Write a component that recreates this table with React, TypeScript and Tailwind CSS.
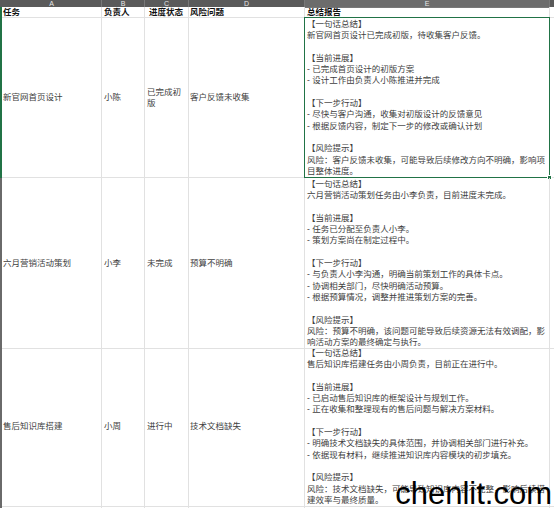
const cjk = "font-['Liberation_Sans','Noto_Sans_CJK_SC',sans-serif]";

type Row = {
  task: string;
  owner: string;
  status: string;
  risk: string;
  height: string;
  lines: string[];
};

const rows: Row[] = [
  {
    task: "新官网首页设计",
    owner: "小陈",
    status: "已完成初版",
    risk: "客户反馈未收集",
    height: "h-[160px]",
    lines: [
      "【一句话总结】",
      "新官网首页设计已完成初版，待收集客户反馈。",
      "",
      "【当前进展】",
      "- 已完成首页设计的初版方案",
      "- 设计工作由负责人小陈推进并完成",
      "",
      "【下一步行动】",
      "- 尽快与客户沟通，收集对初版设计的反馈意见",
      "- 根据反馈内容，制定下一步的修改或确认计划",
      "",
      "【风险提示】",
      "风险：客户反馈未收集，可能导致后续修改方向不明确，影响项",
      "目整体进度。",
    ],
  },
  {
    task: "六月营销活动策划",
    owner: "小李",
    status: "未完成",
    risk: "预算不明确",
    height: "h-[169px]",
    lines: [
      "【一句话总结】",
      "六月营销活动策划任务由小李负责，目前进度未完成。",
      "",
      "【当前进展】",
      "- 任务已分配至负责人小李。",
      "- 策划方案尚在制定过程中。",
      "",
      "【下一步行动】",
      "- 与负责人小李沟通，明确当前策划工作的具体卡点。",
      "- 协调相关部门，尽快明确活动预算。",
      "- 根据预算情况，调整并推进策划方案的完善。",
      "",
      "【风险提示】",
      "风险：预算不明确，该问题可能导致后续资源无法有效调配，影",
      "响活动方案的最终确定与执行。",
    ],
  },
  {
    task: "售后知识库搭建",
    owner: "小周",
    status: "进行中",
    risk: "技术文档缺失",
    height: "h-[159px]",
    lines: [
      "【一句话总结】",
      "售后知识库搭建任务由小周负责，目前正在进行中。",
      "",
      "【当前进展】",
      "- 已启动售后知识库的框架设计与规划工作。",
      "- 正在收集和整理现有的售后问题与解决方案材料。",
      "",
      "【下一步行动】",
      "- 明确技术文档缺失的具体范围，并协调相关部门进行补充。",
      "- 依据现有材料，继续推进知识库内容模块的初步填充。",
      "",
      "【风险提示】",
      "风险：技术文档缺失，可能导致知识库内容不完整，影响后续搭",
      "建效率与最终质量。",
    ],
  },
];

const grid = "grid grid-cols-[2px_100px_43px_44px_116px_245px_1fr]";
const cell = "border-r border-b border-[#e1e1e1]";

export default function App() {
  return (
    <div className={`relative w-[554px] h-[508px] overflow-hidden bg-white ${cjk}`}>
      {/* column letters */}
      <div className={`${grid} h-[7px] bg-[#5a5a5a] text-[7px] leading-[7px] text-[#e6e6e6]`}>
        <div />
        {["A", "B", "C", "D"].map((l) => (
          <div key={l} className="text-center border-r border-[#787878]">
            {l}
          </div>
        ))}
        <div className="text-center bg-[#6c6c6c] border-b border-[#217346] border-r border-[#787878]">E</div>
        <div />
      </div>

      {/* header row */}
      <div className={`${grid} h-[11px] text-[8.5px] leading-[10px] font-bold text-[#111]`}>
        <div className="bg-[#217346]" />
        <div className={`${cell} px-[1px] flex items-end`}>任务</div>
        <div className={`${cell} px-[2px] flex items-end`}>负责人</div>
        <div className={`${cell} px-[4px] flex items-end`}>进度状态</div>
        <div className={`${cell} px-[1px] flex items-end`}>风险问题</div>
        <div className={`${cell} px-[2px] flex items-end`}>总结报告</div>
        <div className="border-b border-[#e1e1e1]" />
      </div>

      {rows.map((r, i) => (
        <div key={r.task} className={`${grid} ${r.height} text-[8.5px] text-[#404040]`}>
          <div className={i === 0 ? "bg-[#217346]" : "bg-[#6a6a6a]"} />
          <div className={`${cell} px-[1px] flex items-center`}>{r.task}</div>
          <div className={`${cell} px-[2px] flex items-center`}>{r.owner}</div>
          <div className={`${cell} px-[2px] flex items-center leading-[11px]`}>{r.status}</div>
          <div className={`${cell} px-[1px] flex items-center`}>{r.risk}</div>
          <div className={`${cell} relative pl-[2px] pt-[1px] leading-[11.3px] whitespace-nowrap`}>
            {r.lines.map((line, j) => (
              <div key={j} className="h-[11.3px]">
                {line}
              </div>
            ))}
            {i === 0 && (
              <>
                <div className="absolute -left-px -top-px -right-px -bottom-px border-[1.5px] border-[#217346]" />
                <div className="absolute -right-[3px] -bottom-[3px] w-[5px] h-[5px] bg-[#217346] border border-white" />
              </>
            )}
          </div>
          <div className="border-b border-[#e1e1e1]" />
        </div>
      ))}

      <div className={`${grid} h-[10px]`}>
        <div className="bg-[#6a6a6a]" />
        <div className="border-r border-[#e1e1e1]" />
        <div className="border-r border-[#e1e1e1]" />
        <div className="border-r border-[#e1e1e1]" />
        <div className="border-r border-[#e1e1e1]" />
        <div className="border-r border-[#e1e1e1]" />
        <div />
      </div>

      {/* watermark */}
      <div className="absolute right-[2px] bottom-0 text-[31px] leading-[28px] text-black font-['Liberation_Sans',sans-serif]">
        chenlit.com
      </div>
    </div>
  );
}
